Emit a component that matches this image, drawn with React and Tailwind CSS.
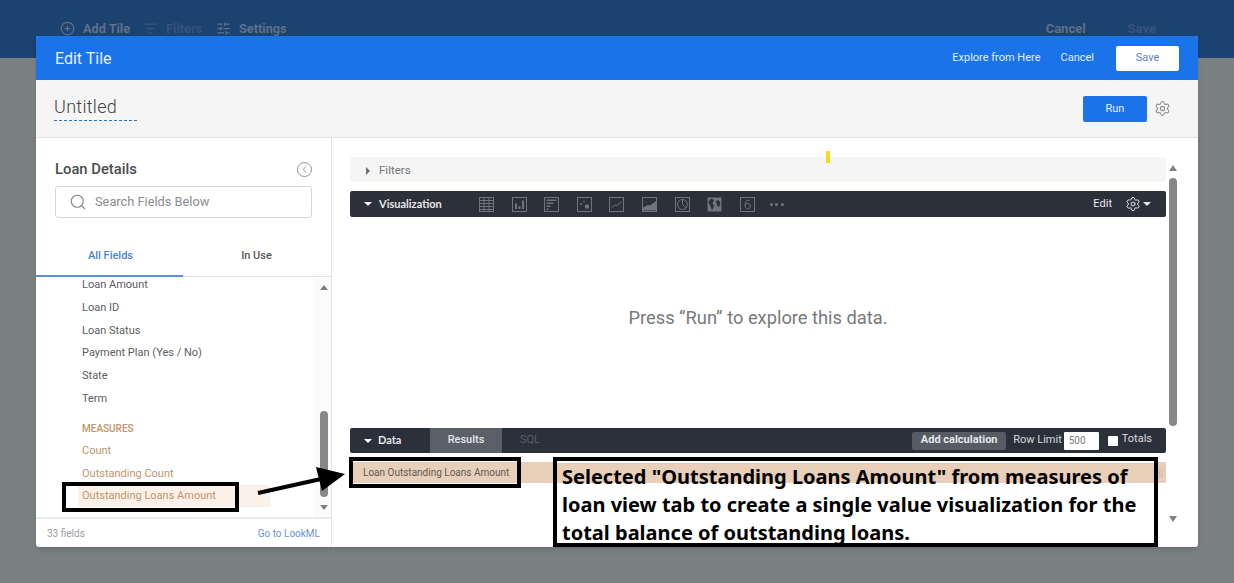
import { CirclePlus, ChevronLeft, Search, Settings, SlidersHorizontal, ListFilter } from "lucide-react";

const dimensions = [
    { label: "Loan Amount", height: "h-[23px]" },
    { label: "Loan ID", height: "h-[23px]" },
    { label: "Loan Status", height: "h-[22px]" },
    { label: "Payment Plan (Yes / No)", height: "h-[23px]" },
    { label: "State", height: "h-[23px]" },
    { label: "Term", height: "h-[23px]" },
];

const VizIcon = ({ children }) => (
    <svg viewBox="0 0 15 15" className="w-[15px] h-[15px] shrink-0" fill="none" stroke="#6f747d" strokeWidth="1">
        {children}
    </svg>
);

const vizIcons = [
    <>
        <rect x="0.5" y="0.5" width="14" height="14" />
        <path d="M0.5 3.5h14M0.5 6.5h14M0.5 9.5h14M0.5 12.5h14M5 .5v14M10 .5v14" />
    </>,
    <>
        <rect x="0.5" y="0.5" width="14" height="14" />
        <path d="M3 6.5h2V12H3zM6.5 9h2v3h-2zM10 3.5h2V12h-2z" fill="#6f747d" stroke="none" />
    </>,
    <>
        <rect x="0.5" y="0.5" width="14" height="14" />
        <path d="M2.5 2.5h10v1.5h-10zM2.5 5.5h7V7h-7zM2.5 8.5h4V10h-4zM2.5 11.5h2V13h-2z" fill="#6f747d" stroke="none" />
    </>,
    <>
        <rect x="0.5" y="0.5" width="14" height="14" />
        <circle cx="4" cy="7" r="1" fill="#6f747d" stroke="none" />
        <circle cx="7" cy="4.5" r="0.8" fill="#6f747d" stroke="none" />
        <circle cx="10" cy="9.5" r="2.2" fill="#6f747d" stroke="none" />
    </>,
    <>
        <rect x="0.5" y="0.5" width="14" height="14" />
        <path d="M2.5 11 L6 8 L8 8.5 L12.5 4.5" />
    </>,
    <>
        <rect x="0.5" y="0.5" width="14" height="14" />
        <path d="M1 13.5V10.5L6 8l2 .5L14 4v9.5z" fill="#6f747d" stroke="none" />
    </>,
    <>
        <rect x="0.5" y="0.5" width="14" height="14" />
        <circle cx="7.5" cy="7.5" r="5" />
        <path d="M7.5 2.5v5l3.5 3.5" />
    </>,
    <>
        <rect x="0.5" y="0.5" width="14" height="14" fill="#6f747d" stroke="none" />
        <path d="M4 1.5 L7 3 L5.5 6 L7 9 L5 13.5 L3.5 9 L1.5 5zM9 4l2.5-1 2 3-1.5 4-2-1.5z" fill="#2b303b" stroke="none" />
    </>,
    <>
        <rect x="0.5" y="0.5" width="14" height="14" />
        <path d="M9.8 3.4C8 3 5.2 3.6 5.2 8c0 2.6 1 3.8 2.6 3.8S10.3 10.6 10.3 9 9.3 6.4 7.8 6.4 5.2 7.4 5.2 9" />
    </>,
];

const App = () => {
    return (
        <div className="relative h-[583px] w-full overflow-hidden bg-[#7b8083] font-['Roboto',sans-serif]">
            {/* page behind the dialog */}
            <div className="flex h-[58px] items-start bg-[#1c4270] pl-[60px] pr-[78px] pt-[19px]">
                <div className="flex items-center gap-[8px] text-[12.7px] font-bold text-[#5f7088]">
                    <CirclePlus className="size-[15px]" />
                    <span className="mr-[5px]">Add Tile</span>
                    <ListFilter className="size-[15px] text-[#36547c]" />
                    <span className="mr-[6px] text-[#36547c]">Filters</span>
                    <SlidersHorizontal className="size-[15px]" />
                    <span>Settings</span>
                </div>
                <div className="ml-auto flex items-center gap-[42px] text-[13px] font-bold">
                    <span className="text-[#5f7088]">Cancel</span>
                    <span className="text-[#36547c]">Save</span>
                </div>
            </div>

            {/* dialog */}
            <div className="absolute left-[36px] top-[36px] flex h-[511px] w-[1162px] flex-col overflow-hidden rounded-[3px] bg-white shadow-md">
                <div className="flex h-[44px] shrink-0 items-center bg-[#1a73e8] pl-[19px] pr-[19px]">
                    <span className="pt-[1px] text-[16px] text-[#e8f1fd]">Edit Tile</span>
                    <span className="ml-auto text-[11px] text-[#e3eefc]">Explore from Here</span>
                    <span className="ml-[20px] text-[11px] text-[#e3eefc]">Cancel</span>
                    <button className="ml-[22px] h-[25px] w-[63px] rounded-[2px] bg-white pt-[1px] text-[11px] text-[#5c7fb8]">
                        Save
                    </button>
                </div>

                <div className="flex h-[58px] shrink-0 items-center border-b border-[#e2e3e4] bg-[#f5f5f5] pl-[18px] pr-[27px]">
                    <span className="mb-[2px] border-b border-dashed border-[#2f6fc4] pr-[20px] text-[18px] font-light leading-[26px] tracking-[0.3px] text-[#3f4245]">
                        Untitled
                    </span>
                    <button className="ml-auto h-[26px] w-[64px] rounded-[2px] bg-[#1a73e8] pt-[2px] text-[11px] text-[#e8f1fd]">
                        Run
                    </button>
                    <Settings className="ml-[7px] size-[17px] text-[#8d9093]" strokeWidth={1.5} />
                </div>

                <div className="flex min-h-0 flex-1">
                    {/* field picker */}
                    <div className="flex w-[296px] shrink-0 flex-col border-r border-[#e6e7e8]">
                        <div className="flex h-[48px] shrink-0 items-end justify-between pb-[7px] pl-[19px] pr-[19px]">
                            <span className="text-[14.8px] font-medium leading-[20px] text-[#4a4d50]">Loan Details</span>
                            <span className="mb-[2px] flex size-[15px] items-center justify-center rounded-full border border-[#8d9093]">
                                <ChevronLeft className="size-[11px] text-[#8d9093]" />
                            </span>
                        </div>
                        <div className="mx-[19px] flex h-[32px] shrink-0 items-center rounded-[3px] border border-[#d4d6d8] pl-[13px]">
                            <Search className="size-[18px] text-[#85888b]" strokeWidth={1.5} />
                            <span className="ml-[8px] text-[12.8px] text-[#8a8d90]">Search Fields Below</span>
                        </div>
                        <div className="mt-[22px] flex h-[37px] shrink-0 border-b border-[#e4e5e6] text-[11px] font-medium">
                            <div className="-mb-px flex w-[147px] items-center justify-center border-b-2 border-[#5b8fdc] pb-[3px] pl-[2px] text-[#4d82d6]">
                                All Fields
                            </div>
                            <div className="flex w-[147px] items-center justify-center pb-[3px] text-[#55585b]">In Use</div>
                        </div>
                        <div className="flex min-h-0 flex-1">
                            <div className="flex-1 overflow-hidden pl-[46px] text-[11px] text-[#5b5e61]">
                                <div className="-mt-[3px]">
                                    {dimensions.map((field) => (
                                        <div key={field.label} className={`flex items-center ${field.height}`}>
                                            {field.label}
                                        </div>
                                    ))}
                                    <div className="mt-[6px] flex h-[23px] items-center text-[10px] font-medium text-[#c0946c]">
                                        MEASURES
                                    </div>
                                    <div className="flex h-[23px] items-center text-[#c0946c]">Count</div>
                                    <div className="flex h-[22px] items-center text-[#c0946c]">Outstanding Count</div>
                                    <div className="-ml-[4px] flex h-[22px] w-[192px] items-center rounded-[2px] bg-[#fbf1e9] pl-[4px] text-[#c0946c]">
                                        Outstanding Loans Amount
                                    </div>
                                </div>
                            </div>
                            <div className="flex w-[17px] shrink-0 flex-col items-center bg-[#fbfbfb] pl-[3px]">
                                <div className="mt-[8px] h-0 w-0 border-x-[4px] border-b-[5px] border-x-transparent border-b-[#7d8083]" />
                                <div className="mt-[121px] h-[86px] w-[8px] rounded-[4px] bg-[#858789]" />
                                <div className="mt-[8px] h-0 w-0 border-x-[4px] border-t-[5px] border-x-transparent border-t-[#7d8083]" />
                            </div>
                        </div>
                        <div className="flex h-[30px] shrink-0 items-center justify-between border-t-2 border-[#e9eaeb] pl-[11px] pr-[11px] text-[10px]">
                            <span className="text-[#9a9d9f]">33 fields</span>
                            <span className="text-[#6f93cf]">Go to LookML</span>
                        </div>
                    </div>

                    {/* results pane */}
                    <div className="flex min-w-0 flex-1">
                        <div className="ml-[18px] flex w-[816px] shrink-0 flex-col pt-[19px]">
                            <div className="flex h-[25px] shrink-0 items-center rounded-[2px] bg-[#f5f5f5] pl-[16px] pt-[2px] text-[11.5px] text-[#737679]">
                                <span className="mr-[9px] h-0 w-0 border-y-[4px] border-l-[4px] border-y-transparent border-l-[#6e7174]" />
                                Filters
                            </div>
                            <div className="mt-[9px] flex h-[26px] shrink-0 items-center rounded-[2px] bg-[#2b303b] pl-[14px] pr-[15px]">
                                <span className="mr-[7px] h-0 w-0 border-x-[4px] border-t-[4px] border-x-transparent border-t-white" />
                                <span className="w-[100px] font-['Lato',sans-serif] text-[11px] font-bold text-[#e6e7e9]">Visualization</span>
                                <div className="flex items-center gap-[17.6px]">
                                    {vizIcons.map((icon, index) => (
                                        <VizIcon key={index}>{icon}</VizIcon>
                                    ))}
                                </div>
                                <div className="ml-[15px] flex gap-[2.5px]">
                                    <span className="size-[3px] rounded-full bg-[#6f747d]" />
                                    <span className="size-[3px] rounded-full bg-[#6f747d]" />
                                    <span className="size-[3px] rounded-full bg-[#6f747d]" />
                                </div>
                                <span className="ml-auto text-[11px] text-[#e6e7e9]">Edit</span>
                                <Settings className="ml-[13px] size-[16px] text-[#e6e7e9]" strokeWidth={1.5} />
                                <span className="ml-[2px] h-0 w-0 border-x-[4px] border-t-[4px] border-x-transparent border-t-[#e6e7e9]" />
                            </div>
                            <div className="flex h-[211px] shrink-0 items-center justify-center pb-[9px] text-[18.3px] text-[#77797c]">
                                Press “Run” to explore this data.
                            </div>
                            <div className="flex h-[25px] shrink-0 items-center overflow-hidden rounded-[2px] bg-[#2b303b] pr-[14px]">
                                <div className="flex w-[80px] items-center pl-[14px]">
                                    <span className="mr-[6px] h-0 w-0 border-x-[4px] border-t-[4px] border-x-transparent border-t-white" />
                                    <span className="font-['Lato',sans-serif] text-[11px] font-bold text-[#e6e7e9]">Data</span>
                                </div>
                                <div className="flex h-full w-[72px] items-center justify-center bg-[#5a5f68] text-[11px] font-medium text-[#e6e7e9]">
                                    Results
                                </div>
                                <span className="ml-[18px] text-[11px] text-[#5a5f68]">SQL</span>
                                <div className="ml-auto flex h-[18px] w-[94px] items-center justify-center rounded-[2px] bg-[#565b64] text-[11px] font-bold text-[#e6e7e9]">
                                    Add calculation
                                </div>
                                <span className="ml-[7px] text-[11px] text-[#d8dadd]">Row Limit</span>
                                <div className="ml-[2px] flex h-[18px] w-[35px] items-center rounded-[1px] bg-white pl-[5px] text-[10px] text-[#7d8083]">
                                    500
                                </div>
                                <span className="ml-[9px] size-[10px] rounded-[1px] bg-white" />
                                <span className="mb-[2px] ml-[4px] text-[11px] text-[#d8dadd]">Totals</span>
                            </div>
                            <div className="mt-[9px] flex h-[21px] shrink-0 items-center bg-[#e8cfba] pl-[13px] pr-[2px] text-[10px] text-[#5d5a57]">
                                Loan Outstanding Loans Amount
                                <Settings className="ml-auto size-[12px] text-[#bfae9f]" strokeWidth={1.5} />
                            </div>
                        </div>
                        <div className="ml-[1px] flex w-[11px] shrink-0 flex-col items-center pt-[27px]">
                            <div className="h-0 w-0 border-x-[4.5px] border-b-[6px] border-x-transparent border-b-[#808285]" />
                            <div className="mt-[7px] h-[248px] w-[8px] rounded-[4px] bg-[#858789]" />
                            <div className="mt-[90px] h-0 w-0 border-x-[4.5px] border-t-[6px] border-x-transparent border-t-[#808285]" />
                        </div>
                    </div>
                </div>
            </div>

            {/* annotations drawn over the screenshot */}
            <div className="absolute left-[826px] top-[151px] h-[12px] w-[4px] bg-[#f5dc1e]" />
            <div className="absolute left-[62px] top-[482px] h-[30px] w-[177px] border-4 border-black" />
            <div className="absolute left-[349px] top-[457px] h-[31px] w-[172px] border-4 border-black" />
            <svg className="absolute left-[255px] top-[465px] h-[35px] w-[95px]" viewBox="0 0 95 35">
                <path d="M3 28 L66 14" stroke="black" strokeWidth="4" />
                <path d="M61 2 L90 9 L67 26z" fill="black" />
            </svg>
            <div className="absolute left-[553px] top-[457px] h-[90px] w-[605px] overflow-hidden border-4 border-black bg-white pl-[5px] pt-[2px] font-['Noto_Sans',sans-serif] text-[20px] font-bold leading-[28px] text-black">
                <div className="-mx-[5px] h-[20px] whitespace-nowrap bg-[#e8cfba] pl-[5px]">
                    Selected "Outstanding Loans Amount" from measures of
                </div>
                <div className="mt-[8px] whitespace-nowrap">loan view tab to create a single value visualization for the</div>
                <div className="whitespace-nowrap">total balance of outstanding loans.</div>
            </div>
        </div>
    );
};

export default App;
